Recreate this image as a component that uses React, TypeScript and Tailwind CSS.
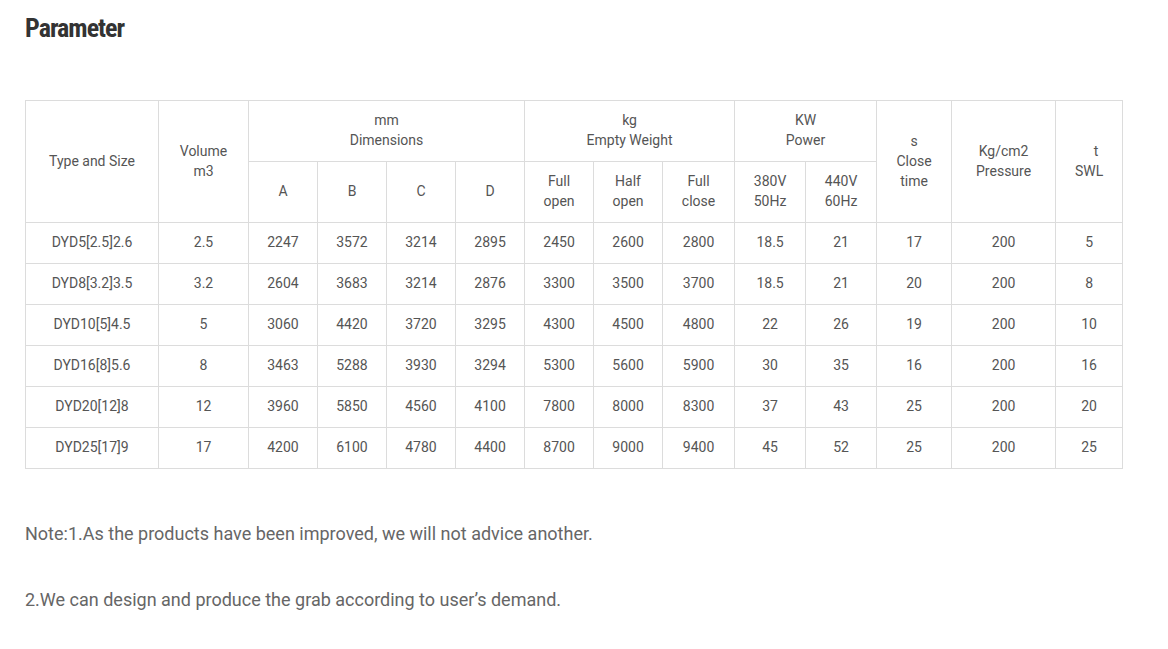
import React from 'react';

const rows = [
  ['DYD5[2.5]2.6', '2.5', '2247', '3572', '3214', '2895', '2450', '2600', '2800', '18.5', '21', '17', '200', '5'],
  ['DYD8[3.2]3.5', '3.2', '2604', '3683', '3214', '2876', '3300', '3500', '3700', '18.5', '21', '20', '200', '8'],
  ['DYD10[5]4.5', '5', '3060', '4420', '3720', '3295', '4300', '4500', '4800', '22', '26', '19', '200', '10'],
  ['DYD16[8]5.6', '8', '3463', '5288', '3930', '3294', '5300', '5600', '5900', '30', '35', '16', '200', '16'],
  ['DYD20[12]8', '12', '3960', '5850', '4560', '4100', '7800', '8000', '8300', '37', '43', '25', '200', '20'],
  ['DYD25[17]9', '17', '4200', '6100', '4780', '4400', '8700', '9000', '9400', '45', '52', '25', '200', '25'],
];

const widths = [133, 90, 69, 69, 69, 69, 69, 69, 72, 71, 71, 75, 104, 67];

const th = 'border border-[#dcdcdc] font-normal text-center align-middle leading-5 p-0 pb-[2px]';
const td = 'border border-[#dcdcdc] text-center align-middle h-[41px] p-0 pb-[2px]';

export default function App() {
  return (
    <div className="bg-white min-h-[649px] w-[1168px] text-[#555] font-['Roboto',sans-serif]">
      <div className="pl-[25px] pt-[12px]">
        <h2 className="text-[26px] leading-8 font-bold text-[#333] font-['Liberation_Sans_Narrow','Roboto_Condensed',sans-serif] tracking-[-1px]">
          Parameter
        </h2>

        {/* parameter table */}
        <table className="mt-[56px] border-collapse table-fixed text-[14px] w-[1098px]">
          <colgroup>
            {widths.map((w, i) => (
              <col key={i} style={{ width: w }} />
            ))}
          </colgroup>
          <thead>
            <tr className="h-[61px]">
              <th rowSpan={2} className={th}>Type and Size</th>
              <th rowSpan={2} className={th}>Volume<br />m3</th>
              <th colSpan={4} className={th}>mm<br />Dimensions</th>
              <th colSpan={3} className={th}>kg<br />Empty Weight</th>
              <th colSpan={2} className={th}>KW<br />Power</th>
              <th rowSpan={2} className={th}>s<br />Close<br />time</th>
              <th rowSpan={2} className={th}>Kg/cm2<br />Pressure</th>
              <th rowSpan={2} className={th}>&nbsp;&nbsp;&nbsp; t<br />SWL</th>
            </tr>
            <tr className="h-[61px]">
              <th className={th}>A</th>
              <th className={th}>B</th>
              <th className={th}>C</th>
              <th className={th}>D</th>
              <th className={th}>Full<br />open</th>
              <th className={th}>Half<br />open</th>
              <th className={th}>Full<br />close</th>
              <th className={th}>380V<br />50Hz</th>
              <th className={th}>440V<br />60Hz</th>
            </tr>
          </thead>
          <tbody>
            {rows.map((r) => (
              <tr key={r[0]}>
                {r.map((c, i) => (
                  <td key={i} className={td}>{c}</td>
                ))}
              </tr>
            ))}
          </tbody>
        </table>

        <p className="mt-[51px] text-[18px] leading-7 text-[#666]">
          Note:1.As the products have been improved, we will not advice another.
        </p>
        <p className="mt-[38px] text-[18px] leading-7 text-[#666]">
          2.We can design and produce the grab according to user’s demand.
        </p>
      </div>
    </div>
  );
}
